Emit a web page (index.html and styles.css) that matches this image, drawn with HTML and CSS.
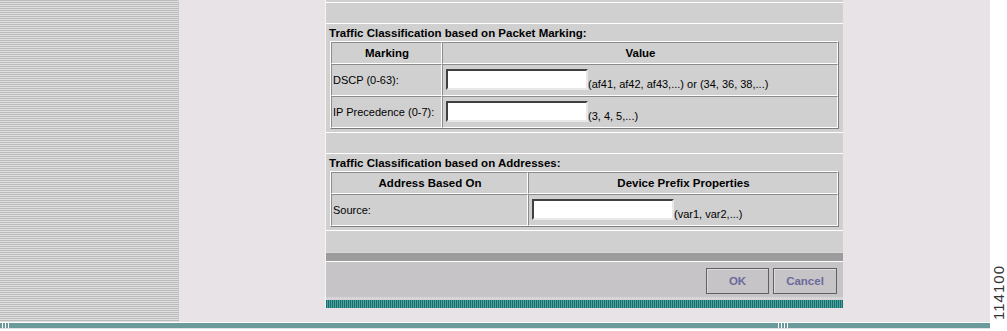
FILE: index.html
```html
<!doctype html>
<html lang="en-us">
	<head>
		<meta charset="utf-8">
		<title>Traffic Classification</title>
		<link rel="stylesheet" href="styles.css">
	</head>

	<body>
		<div class="screen">
			<div class="canvas">
				<div class="upper">
					<div class="stripes"></div>
					<div class="workspace">
						<div class="panel">
							<div class="row row-top"></div>
							<div class="row row-blank"></div>

							<div class="row section">
								<div class="section-title">Traffic Classification based on Packet Marking:</div>
								<table class="grid">
									<tr class="head">
										<th class="col-marking">Marking</th>
										<th>Value</th>
									</tr>
									<tr>
										<td>DSCP (0-63):</td>
										<td><div class="field"><input type="text"><span class="hint">(af41, af42, af43,...) or (34, 36, 38,...)</span></div></td>
									</tr>
									<tr>
										<td>IP Precedence (0-7):</td>
										<td><div class="field"><input type="text"><span class="hint">(3, 4, 5,...)</span></div></td>
									</tr>
								</table>
							</div>

							<div class="row row-blank"></div>

							<div class="row section">
								<div class="section-title">Traffic Classification based on Addresses:</div>
								<table class="grid">
									<tr class="head">
										<th class="col-address">Address Based On</th>
										<th>Device Prefix Properties</th>
									</tr>
									<tr>
										<td>Source:</td>
										<td><div class="field"><input type="text"><span class="hint">(var1, var2,...)</span></div></td>
									</tr>
								</table>
							</div>

							<div class="row row-blank row-last"></div>
							<div class="bar-dark"></div>
							<div class="actions">
								<button class="btn">OK</button>
								<button class="btn">Cancel</button>
							</div>
							<div class="bar-gap"></div>
							<div class="bar-teal"></div>
						</div>
					</div>
				</div>
				<div class="rule">
					<span class="rule-ticks"></span>
					<span class="rule-fill rule-fill-a"></span>
					<span class="rule-ticks rule-ticks-b"></span>
					<span class="rule-fill"></span>
				</div>
			</div>
			<div class="fig-id"><span>114100</span></div>
		</div>
	</body>
</html>
```

FILE: styles.css
```css
body {
	margin: 0;
	background: #fff;
	font-family: "Liberation Sans", Arial, sans-serif;
	font-size: 11px;
	color: #000;
}
.screen {
	display: flex;
	width: 1007px;
	height: 331px;
	overflow: hidden;
}
.canvas {
	width: 990px;
	display: flex;
	flex-direction: column;
}
.upper {
	display: flex;
	height: 322px;
}
.stripes {
	width: 178px;
	background: repeating-linear-gradient(180deg, #bababa 0, #bababa 1px, #e0e0e0 1px, #e0e0e0 2px);
	border-right: 1px dotted #d8d8d8;
}
.workspace {
	flex: 1;
	background: #e7e3e7;
	padding-left: 146px;
}

/* main dialog panel */
.panel {
	width: 517px;
	background: #d0d0d0;
	border-left: 1px solid #f4f4f4;
	display: flex;
	flex-direction: column;
}
.row {
	border-top: 1px solid #fff;
}
.row-top {
	border-top: 0;
	height: 2px;
}
.row-blank {
	height: 20px;
}
.row-last {
	height: 21px;
}
.section {
	padding: 0 4px 3px 4px;
}
.section-title {
	font-weight: bold;
	font-size: 11.5px;
	height: 17px;
	line-height: 19px;
	margin-left: -1px;
	white-space: nowrap;
}

.grid {
	width: 509px;
	border-collapse: separate;
	border-spacing: 0;
	border: 1px solid;
	border-color: #fff #7c7c7c #7c7c7c #fff;
}
.grid th, .grid td {
	border: 1px solid;
	border-color: #8c8c8c #fff #fff #8c8c8c;
	padding: 0 0 0 1px;
	white-space: nowrap;
}
.grid th {
	height: 20px;
	text-align: center;
	font-weight: bold;
	font-size: 11.5px;
}
.grid td {
	height: 30px;
}
.col-marking {
	width: 108px;
}
.col-address {
	width: 194px;
}
.field {
	display: flex;
	align-items: flex-end;
	padding: 4px 0 5px 2px;
}
.field input {
	width: 142px;
	height: 21px;
	box-sizing: border-box;
	margin: 0;
	padding: 0 2px;
	background: #fff;
	border: 2px solid;
	border-color: #404040 #e8e8e8 #e8e8e8 #404040;
	font: inherit;
}
.hint {
	line-height: 12px;
}

/* footer bars */
.bar-dark {
	height: 8px;
	background: #9c9c9c;
	border-top: 1px solid #d8d8d8;
	border-bottom: 1px solid #fff;
}
.actions {
	height: 36px;
	background: #c6c4c6;
	display: flex;
	justify-content: flex-end;
	align-items: flex-start;
	gap: 4px;
	padding: 6px 6px 0 0;
	box-sizing: border-box;
	border-bottom: 1px dotted #e6e4e6;
}
.btn {
	width: 63px;
	height: 26px;
	background: #c6c4c6;
	border: 1px solid #606060;
	box-shadow: inset 1px 1px 0 #dcdcdc;
	color: #6b6b9b;
	font-family: "Liberation Sans", Arial, sans-serif;
	font-size: 11.5px;
	font-weight: bold;
	padding: 0;
}
.btn + .btn {
	width: 64px;
}
.bar-gap {
	height: 2px;
	background: #d6d4d6;
}
.bar-teal {
	height: 8px;
	background: repeating-linear-gradient(90deg, #1d6c6a 0, #1d6c6a 1px, #47a39e 1px, #47a39e 2px);
}

/* bottom rule */
.rule {
	display: flex;
	height: 5px;
	margin-top: 1px;
	border-bottom: 1px solid #e0e0e0;
}
.rule-ticks {
	width: 11px;
	background: repeating-linear-gradient(90deg, #6b9a9a 0, #6b9a9a 2px, #fff 2px, #fff 3px);
}
.rule-ticks-b {
	width: 14px;
}
.rule-fill {
	flex: 1;
	background: #6b9a9a;
}
.rule-fill-a {
	flex: none;
	width: 765px;
}

.fig-id {
	width: 17px;
	display: flex;
	align-items: flex-end;
	justify-content: center;
	padding-bottom: 11px;
}
.fig-id span {
	writing-mode: vertical-rl;
	transform: rotate(180deg);
	font-family: "Liberation Sans", Arial, sans-serif;
	font-size: 15px;
	letter-spacing: 1px;
	color: #333;
	line-height: 14px;
}
```
